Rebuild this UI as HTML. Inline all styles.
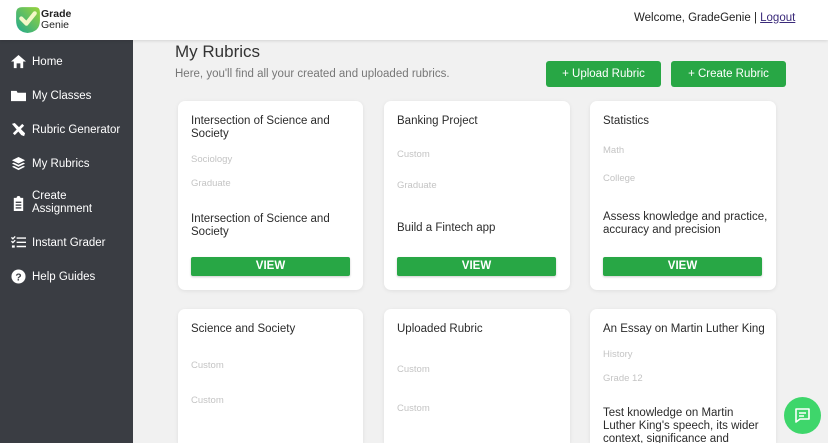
<!DOCTYPE html>
<html style="overflow:hidden;width:828px;height:443px"><head><style>
*{margin:0;padding:0;box-sizing:border-box}
body{width:828px;height:443px;overflow:hidden;background:#f1f1f1;font-family:"Liberation Sans",sans-serif;position:relative;color:#2b2b2b}
.hdr{position:absolute;left:0;top:0;width:828px;height:40px;background:#fff;box-shadow:0 1px 3px rgba(0,0,0,.12);z-index:2}
.side{position:absolute;left:0;top:40px;width:133px;height:403px;background:#3a3d43}
.nav{position:absolute;left:11px;color:#fff;font-size:11.5px;display:flex;align-items:center}
.nav svg{width:15px;height:15px;margin-right:6px;fill:#fff}
.t{position:absolute;font-size:11.5px;line-height:13px;white-space:nowrap}
.g{color:#c4c4c4;font-size:9.5px}
.card{position:absolute;background:#fff;border-radius:7px;box-shadow:0 1px 4px rgba(0,0,0,.08)}
.vb{position:absolute;background:#28a745;color:#fff;font-weight:bold;font-size:11.5px;text-align:center;line-height:19px;border-radius:2px;height:19px;box-shadow:0 1px 2px rgba(0,0,0,.2)}
.btn{position:absolute;top:61px;height:26px;background:#28a745;color:#fff;font-size:11.5px;text-align:center;line-height:26px;border-radius:3px}
</style></head><body>
<div class="hdr">
<svg style="position:absolute;left:13px;top:5px" width="29" height="29" viewBox="0 0 28 28"><defs><linearGradient id="lg" x1="0" y1="1" x2="1" y2="0"><stop offset="0" stop-color="#1fa88f"/><stop offset="1" stop-color="#9bd43a"/></linearGradient></defs><path d="M3 8 Q3 2 9 2 H22 Q26 2 26 7 V15 Q26 26 14 27 Q3 26 3 15Z" fill="url(#lg)"/><path d="M8 13 L13 18 L21 8" stroke="#f4f8c8" stroke-width="4" fill="none" stroke-linecap="round" stroke-linejoin="round"/></svg>
<div class="t" style="left:41px;top:9px;font-size:10.5px;line-height:10.5px;color:#222"><b>Grade</b><br>Genie</div>
<div class="t" style="left:634px;top:12px;font-size:11.5px;color:#222">Welcome, GradeGenie | <span style="text-decoration:underline;color:#3a2a7a">Logout</span></div>
</div>
<div class="side">
<div class="nav" style="top:14px"><svg viewBox="0 0 16 16"><path d="M8 1 L16 8 H13 V15 H10 V10 H6 V15 H3 V8 H0Z"/></svg>Home</div>
<div class="nav" style="top:48px"><svg viewBox="0 0 16 16"><path d="M0 3 H6 L7 5 H16 V14 H0Z"/></svg>My Classes</div>
<div class="nav" style="top:82px"><svg viewBox="0 0 16 16"><path d="M2 12 L12 2 L14 4 L4 14Z M1 2 L4 1 L15 12 L14 15 L11 14Z"/></svg>Rubric Generator</div>
<div class="nav" style="top:116px"><svg viewBox="0 0 16 16"><path d="M8 1 L15 4.5 L8 8 L1 4.5Z M1 8 L3 7 L8 9.5 L13 7 L15 8 L8 11.5Z M1 11.5 L3 10.5 L8 13 L13 10.5 L15 11.5 L8 15Z"/></svg>My Rubrics</div>
<div class="nav" style="top:150px;line-height:13px"><svg viewBox="0 0 16 16"><path d="M3 2 H6 Q6 0 8 0 Q10 0 10 2 H13 V16 H3Z" /><rect x="5" y="6" width="6" height="1.4" fill="#3a3d43"/><rect x="5" y="9" width="6" height="1.4" fill="#3a3d43"/><rect x="5" y="12" width="6" height="1.4" fill="#3a3d43"/></svg>Create<br>Assignment</div>
<div class="nav" style="top:195px"><svg viewBox="0 0 16 16"><path d="M0 3 L1 2 L2 3 L4 1 L5 2 L2 5Z M6 2.5 H16 V4 H6Z M6 7 H16 V8.5 H6Z M6 11.5 H16 V13 H6Z M0 7 L1 6 L2 7 L4 5 L5 6 L2 9Z M1 11 H4 V13.5 H1Z"/></svg>Instant Grader</div>
<div class="nav" style="top:229px"><svg viewBox="0 0 16 16"><circle cx="8" cy="8" r="7.5"/><text x="8" y="12" font-size="11" font-weight="bold" text-anchor="middle" fill="#3a3d43" font-family="Liberation Sans">?</text></svg>Help Guides</div>
</div>
<div class="t" style="left:175px;top:42px;font-size:17px;line-height:20px;color:#333">My Rubrics</div>
<div class="t" style="left:175px;top:68px;color:#777">Here, you'll find all your created and uploaded rubrics.</div>
<div class="btn" style="left:546px;width:115px">+ Upload Rubric</div>
<div class="btn" style="left:671px;width:115px">+ Create Rubric</div>

<div class="card" style="left:178px;top:101px;width:185px;height:189px"></div>
<div class="card" style="left:384px;top:101px;width:186px;height:189px"></div>
<div class="card" style="left:590px;top:101px;width:186px;height:189px"></div>
<div class="card" style="left:178px;top:309px;width:185px;height:134px;border-radius:7px 7px 0 0"></div>
<div class="card" style="left:384px;top:309px;width:186px;height:134px;border-radius:7px 7px 0 0"></div>
<div class="card" style="left:590px;top:309px;width:186px;height:134px;border-radius:7px 7px 0 0"></div>

<div class="t" style="left:191px;top:115px">Intersection of Science and<br>Society</div>
<div class="t g" style="left:191px;top:153px">Sociology</div>
<div class="t g" style="left:191px;top:177px">Graduate</div>
<div class="t" style="left:191px;top:213px">Intersection of Science and<br>Society</div>
<div class="vb" style="left:191px;top:257px;width:159px">VIEW</div>

<div class="t" style="left:397px;top:115px">Banking Project</div>
<div class="t g" style="left:397px;top:148px">Custom</div>
<div class="t g" style="left:397px;top:179px">Graduate</div>
<div class="t" style="left:397px;top:222px">Build a Fintech app</div>
<div class="vb" style="left:397px;top:257px;width:159px">VIEW</div>

<div class="t" style="left:603px;top:115px">Statistics</div>
<div class="t g" style="left:603px;top:144px">Math</div>
<div class="t g" style="left:603px;top:172px">College</div>
<div class="t" style="left:603px;top:211px">Assess knowledge and practice,<br>accuracy and precision</div>
<div class="vb" style="left:603px;top:257px;width:159px">VIEW</div>

<div class="t" style="left:191px;top:323px">Science and Society</div>
<div class="t g" style="left:191px;top:359px">Custom</div>
<div class="t g" style="left:191px;top:394px">Custom</div>

<div class="t" style="left:397px;top:323px">Uploaded Rubric</div>
<div class="t g" style="left:397px;top:363px">Custom</div>
<div class="t g" style="left:397px;top:402px">Custom</div>

<div class="t" style="left:603px;top:323px">An Essay on Martin Luther King</div>
<div class="t g" style="left:603px;top:348px">History</div>
<div class="t g" style="left:603px;top:372px">Grade 12</div>
<div class="t" style="left:603px;top:407px">Test knowledge on Martin<br>Luther King's speech, its wider<br>context, significance and</div>

<div style="position:absolute;left:784px;top:397px;width:37px;height:37px;border-radius:50%;background:#3ed66b"></div>
<svg style="position:absolute;left:794px;top:407px" width="17" height="17" viewBox="0 0 17 17"><path d="M2 2 H15 V12 H6 L2 15Z" fill="none" stroke="#fff" stroke-width="1.6" stroke-linejoin="round"/><path d="M5 6 H12 M5 9 H10" stroke="#fff" stroke-width="1.4"/></svg>
</body></html>
